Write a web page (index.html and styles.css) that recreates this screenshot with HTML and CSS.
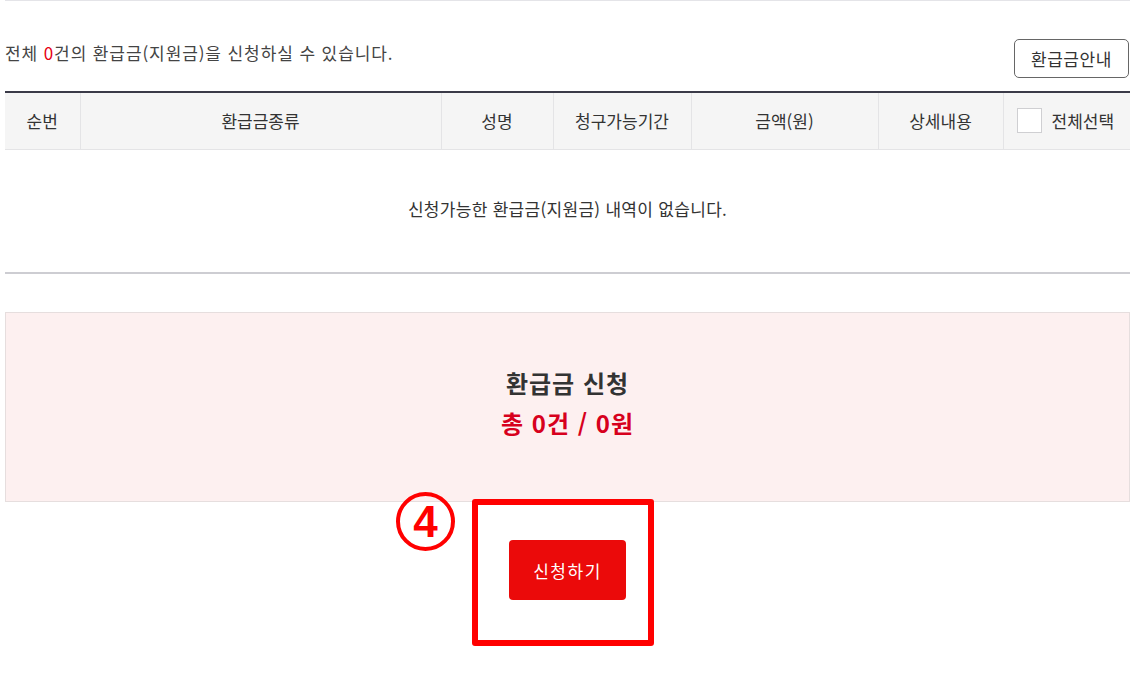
FILE: index.html
```html
<!DOCTYPE html>
<html lang="ko">
<head>
<meta charset="utf-8">
<title>환급금 신청</title>
<link rel="stylesheet" href="styles.css">
</head>
<body>
<div class="page">
  <div class="top-line"></div>
  <div class="info-row">
    <p class="count">전체 <span class="num">0</span>건의 환급금(지원금)을 신청하실 수 있습니다.</p>
    <button class="guide-btn" type="button">환급금안내</button>
  </div>
  <table class="list">
    <colgroup>
      <col class="c1"><col class="c2"><col class="c3"><col class="c4"><col class="c5"><col class="c6"><col class="c7">
    </colgroup>
    <thead>
      <tr>
        <th>순번</th>
        <th>환급금종류</th>
        <th>성명</th>
        <th>청구가능기간</th>
        <th>금액(원)</th>
        <th>상세내용</th>
        <th class="chk-cell"><label class="chk"><span class="box"></span>전체선택</label></th>
      </tr>
    </thead>
    <tbody>
      <tr><td colspan="7" class="empty">신청가능한 환급금(지원금) 내역이 없습니다.</td></tr>
    </tbody>
  </table>
  <div class="summary">
    <div class="summary-title">환급금 신청</div>
    <div class="summary-total">총 0건 / 0원</div>
  </div>
  <div class="submit">
    <button class="apply-btn" type="button">신청하기</button>
    <div class="mark-box"></div>
    <div class="mark-num">4</div>
  </div>
</div>
</body>
</html>
```
FILE: styles.css
```css
* { box-sizing: border-box; }
html, body { margin: 0; padding: 0; background: #fff; }
body {
  font-family: "Noto Sans CJK KR", "Noto Sans", sans-serif;
  color: #333;
}
.page {
  width: 1125px;
  margin-left: 5px;
  padding-bottom: 76px;
}
.top-line {
  border-top: 1px solid #e4e4e8;
  height: 0;
}
.info-row {
  display: flex;
  justify-content: space-between;
  align-items: flex-start;
  margin-top: 38px;
  height: 39px;
}
.count {
  margin: 0;
  padding-top: 1px;
  font-size: 17px;
  line-height: 25px;
  color: #444;
  letter-spacing: 0.9px;
}
.count .num { color: #e60012; }
.guide-btn {
  height: 39px;
  width: 115px;
  margin-right: 1px;
  border: 1px solid #666;
  border-radius: 5px;
  background: #fff;
  font-family: inherit;
  font-size: 17px;
  letter-spacing: 0.6px;
  color: #333;
  padding: 0;
  cursor: pointer;
}
.list {
  width: 100%;
  margin-top: 13px;
  border-collapse: collapse;
  table-layout: fixed;
  border-top: 2px solid #3a3a48;
}
.c1 { width: 75px; }
.c2 { width: 361px; }
.c3 { width: 112px; }
.c4 { width: 138px; }
.c5 { width: 187px; }
.c6 { width: 125px; }
.c7 { width: 127px; }
.list th {
  height: 57px;
  background: #f5f5f5;
  border-bottom: 1px solid #e4e4e6;
  border-left: 1px solid #e4e4e6;
  font-weight: normal;
  font-size: 17px;
  color: #333;
  padding: 0;
  text-align: center;
}
.list th:first-child { border-left: none; }
.chk {
  display: flex;
  align-items: center;
  justify-content: flex-start;
  padding-left: 13px;
  gap: 10px;
}
.chk .box {
  width: 25px;
  height: 25px;
  background: #fff;
  border: 1px solid #cfcfd2;
}
.list td.empty {
  height: 124px;
  text-align: center;
  font-size: 17px;
  color: #333;
  letter-spacing: 0.3px;
  border-bottom: 2px solid #cdcdd2;
  padding: 0 0 4px 0;
}
.summary {
  margin-top: 38px;
  height: 190px;
  background: #fdf0f0;
  border: 1px solid #e6dede;
  display: flex;
  flex-direction: column;
  align-items: center;
  justify-content: center;
  padding-bottom: 8px;
}
.summary-title,
.summary-total {
  font-size: 24px;
  line-height: 40px;
  font-weight: bold;
  letter-spacing: 1px;
}
.summary-title { color: #333; }
.summary-total { color: #d7001d; }
.submit {
  position: relative;
  display: flex;
  justify-content: center;
  padding-top: 38px;
}
.apply-btn {
  width: 117px;
  height: 60px;
  border: none;
  border-radius: 4px;
  background: #eb0a0a;
  color: #fff;
  font-family: inherit;
  font-size: 17px;
  letter-spacing: 1.5px;
  padding: 0;
  cursor: pointer;
}
.mark-box {
  position: absolute;
  left: 467px;
  top: -3px;
  width: 182px;
  height: 147px;
  border: 6px solid #ff0000;
  border-radius: 3px;
}
.mark-num {
  position: absolute;
  left: 391px;
  top: -10px;
  width: 59px;
  height: 59px;
  border: 4px solid #ff0000;
  border-radius: 50%;
  color: #ff0000;
  font-family: "Liberation Sans", Arial, sans-serif;
  font-weight: bold;
  font-size: 44px;
  line-height: 51px;
  text-align: center;
}
```
